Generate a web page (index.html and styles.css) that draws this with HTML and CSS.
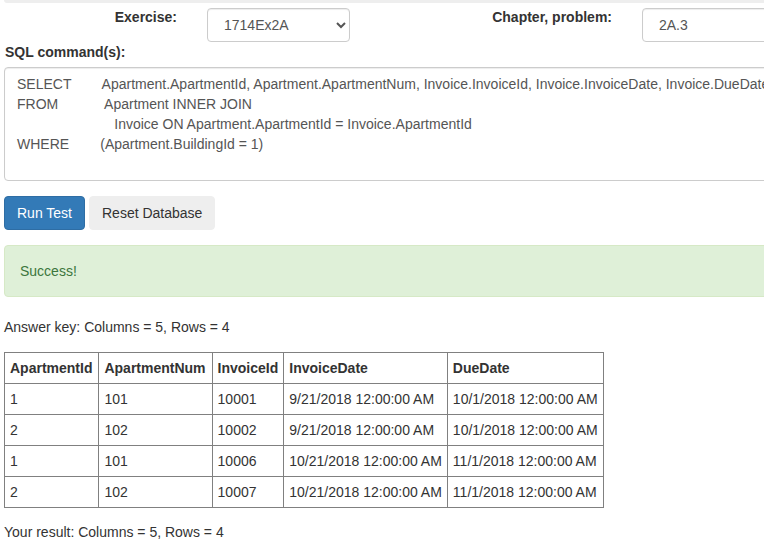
FILE: index.html
```html
<!DOCTYPE html>
<html>
<head>
<meta charset="utf-8">
<link rel="stylesheet" href="styles.css">
</head>
<body>
<div class="page">
  <div class="topbar"></div>
  <div class="form-row">
    <label class="lbl lbl-ex">Exercise:</label>
    <div class="ctl ctl-ex">
      <select class="select"><option>1714Ex2A</option></select>
    </div>
    <label class="lbl lbl-ch">Chapter, problem:</label>
    <div class="ctl ctl-ch">
      <input class="input" type="text" value="2A.3">
    </div>
  </div>
  <label class="sql-label">SQL command(s):</label>
  <div class="sql-box">SELECT        Apartment.ApartmentId, Apartment.ApartmentNum, Invoice.InvoiceId, Invoice.InvoiceDate, Invoice.DueDate
FROM            Apartment INNER JOIN
                         Invoice ON Apartment.ApartmentId = Invoice.ApartmentId
WHERE        (Apartment.BuildingId = 1)</div>
  <div class="buttons">
    <button class="btn btn-primary">Run Test</button>
    <button class="btn btn-default">Reset Database</button>
  </div>
  <div class="alert">Success!</div>
  <p class="summary">Answer key: Columns = 5, Rows = 4</p>
  <table class="result">
    <thead>
      <tr><th class="wide">ApartmentId</th><th class="wide">ApartmentNum</th><th>InvoiceId</th><th>InvoiceDate</th><th>DueDate</th></tr>
    </thead>
    <tbody>
      <tr><td>1</td><td>101</td><td>10001</td><td>9/21/2018 12:00:00 AM</td><td>10/1/2018 12:00:00 AM</td></tr>
      <tr><td>2</td><td>102</td><td>10002</td><td>9/21/2018 12:00:00 AM</td><td>10/1/2018 12:00:00 AM</td></tr>
      <tr><td>1</td><td>101</td><td>10006</td><td>10/21/2018 12:00:00 AM</td><td>11/1/2018 12:00:00 AM</td></tr>
      <tr><td>2</td><td>102</td><td>10007</td><td>10/21/2018 12:00:00 AM</td><td>11/1/2018 12:00:00 AM</td></tr>
    </tbody>
  </table>
  <p class="summary summary-2">Your result: Columns = 5, Rows = 4</p>
</div>
</body>
</html>
```
FILE: styles.css
```css
html, body {
  margin: 0;
  padding: 0;
  overflow: hidden;
  background: #fff;
}
body {
  font-family: "Liberation Sans", Arial, sans-serif;
  font-size: 14px;
  line-height: 20px;
  color: #333;
}
.page {
  padding-left: 4px;
  width: 1000px;
}
.topbar {
  height: 3px;
  background: #eeeeee;
  border-bottom-left-radius: 4px;
}
.form-row {
  display: flex;
  align-items: flex-start;
  margin-top: 5px;
  height: 34px;
}
.lbl {
  font-weight: bold;
  text-align: right;
  padding-right: 15px;
  margin-top: -1px;
  box-sizing: border-box;
}
.lbl-ex { width: 188px; }
.ctl-ex { width: 173px; padding-left: 15px; box-sizing: border-box; }
.lbl-ch { width: 262px; }
.ctl-ch { padding-left: 15px; }
.select {
  display: block;
  width: 143px;
  height: 34px;
  padding: 6px 12px;
  font-family: inherit;
  font-size: 14px;
  color: #555;
  background: #fff;
  border: 1px solid #ccc;
  border-radius: 4px;
  box-shadow: inset 0 1px 1px rgba(0,0,0,.075);
  box-sizing: border-box;
}
.input {
  display: block;
  width: 200px;
  height: 34px;
  padding: 6px 16px;
  font-family: inherit;
  font-size: 14px;
  color: #555;
  background: #fff;
  border: 1px solid #ccc;
  border-radius: 4px;
  box-shadow: inset 0 1px 1px rgba(0,0,0,.075);
  box-sizing: border-box;
}
.sql-label {
  display: block;
  font-weight: bold;
  margin-top: 0;
  margin-bottom: 5px;
  padding-left: 1px;
}
.sql-box {
  height: 114px;
  box-sizing: border-box;
  padding: 6px 12px;
  border: 1px solid #ccc;
  border-radius: 4px;
  box-shadow: inset 0 1px 1px rgba(0,0,0,.075);
  color: #555;
  white-space: pre;
  overflow: hidden;
}
.buttons {
  display: flex;
  gap: 4px;
  margin-top: 15px;
}
.btn {
  font-family: inherit;
  font-size: 14px;
  line-height: 20px;
  padding: 6px 12px;
  border: 1px solid transparent;
  border-radius: 4px;
  height: 34px;
  cursor: pointer;
}
.btn-primary {
  background: #337ab7;
  border-color: #2e6da4;
  color: #fff;
}
.btn-default {
  background: #eeeeee;
  border-color: #eeeeee;
  color: #333;
}
.alert {
  margin-top: 15px;
  margin-bottom: 20px;
  padding: 15px;
  background: #dff0d8;
  border: 1px solid #d6e9c6;
  border-radius: 4px;
  color: #3c763d;
}
.summary {
  margin: 0 0 15px 0;
}
.summary-2 {
  margin-top: 14px;
}
.result {
  border-collapse: collapse;
}
.result th, .result td {
  border: 1px solid #808080;
  padding: 5px;
  text-align: left;
  white-space: nowrap;
}
.result th {
  font-weight: bold;
}
.result th.wide {
  padding-right: 6px;
}
```
